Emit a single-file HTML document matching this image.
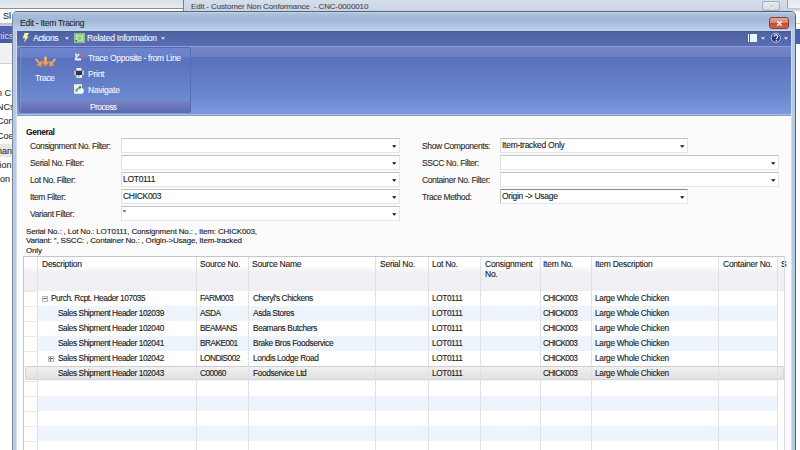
<!DOCTYPE html>
<html><head><meta charset="utf-8">
<style>
*{box-sizing:border-box;margin:0;padding:0}
html,body{width:800px;height:450px;overflow:hidden;background:#fff}
body{position:relative;font-family:"Liberation Sans",sans-serif;font-size:8px;color:#1a1a1a;letter-spacing:-0.3px}
.t{-webkit-text-stroke:0.12px currentColor}
.a{position:absolute;white-space:nowrap}
.t{position:absolute;white-space:nowrap;line-height:10px}
.w{color:#f0f3fc}
</style></head><body>

<div class="a" style="left:0;top:0;width:184px;height:8px;background:linear-gradient(#d9dfe9,#e9ecf1)"></div>
<div class="a" style="left:0;top:8px;width:184px;height:1px;background:#8d9199"></div>
<div class="a" style="left:0;top:9px;width:12px;height:15px;background:#fbfbfb"></div>
<div class="t" style="left:3px;top:11px;font-size:9px;color:#333;letter-spacing:0">Sl</div>
<div class="a" style="left:0;top:23px;width:12px;height:3px;background:linear-gradient(#b8bcc4,#d0d4e0)"></div>
<div class="a" style="left:0;top:26px;width:12px;height:17px;background:linear-gradient(#5563b0,#4a5aa8)"></div>
<div class="t" style="left:-5px;top:30.7px;color:#d8def4;font-size:9px;letter-spacing:0;-webkit-text-stroke:0">mics</div>
<div class="a" style="left:0;top:43px;width:12px;height:20px;background:#f1f1f1"></div>
<div class="a" style="left:0;top:63px;width:12px;height:1px;background:#d0d0d0"></div>
<div class="t" style="left:-3px;top:88px;font-size:9px;color:#333;letter-spacing:0">n C</div>
<div class="t" style="left:-3px;top:102px;font-size:9px;color:#333;letter-spacing:0">NCs</div>
<div class="t" style="left:-3px;top:116px;font-size:9px;color:#333;letter-spacing:0">Con</div>
<div class="t" style="left:-3px;top:131px;font-size:9px;color:#333;letter-spacing:0">Coe</div>
<div class="a" style="left:0;top:144px;width:12px;height:13px;background:#e6e6e6"></div>
<div class="t" style="left:-3px;top:146px;font-size:9px;color:#333;letter-spacing:0">nan</div>
<div class="t" style="left:-3px;top:160px;font-size:9px;color:#333;letter-spacing:0">tion</div>
<div class="t" style="left:0px;top:174px;font-size:9px;color:#333;letter-spacing:0">on</div>
<div class="a" style="left:184px;top:0;width:616px;height:11px;background:linear-gradient(#d6deea,#cad4e3)"></div>
<div class="a" style="left:183px;top:0;width:1px;height:11px;background:#7c8088"></div>
<div class="t" style="left:191px;top:2px;color:#4a4f58;font-size:8px;letter-spacing:-0.13px">Edit - Customer Non Conformance &nbsp;- CNC-0000010</div>
<div class="a" style="left:762px;top:1px;width:18px;height:10px;border:1px solid #a4acb8;border-radius:2px;background:linear-gradient(#e6eaf0,#d4dae4)"></div>
<svg class="a" style="left:768px;top:3px" width="7" height="6" viewBox="0 0 7 6"><path d="M1 0.5L6 5.5M6 0.5L1 5.5" stroke="#fff" stroke-width="2"/><path d="M1 0.5L6 5.5M6 0.5L1 5.5" stroke="#8a909a" stroke-width="0.7"/></svg>
<div class="a" style="left:796px;top:11px;width:4px;height:439px;background:#fdfdfd"></div>
<div class="a" style="left:787px;top:0;width:13px;height:9px;background:linear-gradient(#e2e8f0,#eef2f6);border-left:1px solid #9aa0aa;border-bottom:1px solid #c0c4cc"></div>
<div class="a" style="left:796px;top:29px;width:4px;height:15px;background:#4d60ad"></div>
<div class="a" style="left:796px;top:23px;width:4px;height:1px;background:#c8ccd4"></div>
<div class="a" style="left:12px;top:11px;width:784px;height:450px;background:#b6cae4;border:1px solid #5a6476;border-left-color:#7a88a0;border-radius:5px 5px 0 0"></div>
<div class="a" style="left:13px;top:12px;width:782px;height:19px;background:linear-gradient(#c6d6ea,#a8bfdb 2px,#a0b8d6 8px,#adc4e0 13px,#b6cbe8 17px,#c2d6f2 19px);border-radius:4px 4px 0 0"></div>
<div class="a" style="left:16px;top:31px;width:1px;height:419px;background:#d2def0"></div>
<div class="a" style="left:791px;top:31px;width:1px;height:419px;background:#d2def0"></div>
<div class="t" style="left:20px;top:18px;color:#1b2a44;font-size:8.5px;letter-spacing:-0.25px">Edit - Item Tracing</div>
<div class="a" style="left:769px;top:17px;width:20px;height:12px;border:1px solid #84402f;border-radius:3px;background:linear-gradient(#e4a898,#d8806c 45%,#c24e38 55%,#cc6450)"></div>
<svg class="a" style="left:776px;top:19.5px" width="7" height="7" viewBox="0 0 7 7"><path d="M1.2 1.2L5.8 5.8M5.8 1.2L1.2 5.8" stroke="#fff" stroke-width="1.3"/></svg>
<div class="a" style="left:17px;top:31px;width:774px;height:15px;background:linear-gradient(#48598f,#4f62a2 2px,#5467ab 8px,#5a6cb3)"></div>
<div class="a" style="left:17px;top:46px;width:774px;height:1px;background:#8a9cd8"></div>
<svg class="a" style="left:22px;top:33px" width="8" height="10" viewBox="0 0 8 10"><path d="M2.6 0H7L4.8 3.6H6.8L1.8 9.8 3.2 5.2H0.6Z" fill="#f4f08e"/><path d="M3 0.6H5.8L4 3.4" stroke="#fffde0" stroke-width="0.8" fill="none"/></svg>
<div class="t w" style="left:33px;top:33px;font-size:8.5px;letter-spacing:-0.4px">Actions</div>
<svg class="a" style="left:64.5px;top:37px" width="4" height="3"><path d="M0 0.2H4L2.0 2.8Z" fill="#e4e9f8"/></svg>
<svg class="a" style="left:74px;top:33px" width="11" height="10" viewBox="0 0 11 10"><rect x="0.5" y="0.5" width="10" height="9" fill="#8ccc84" stroke="#9cb8a0" stroke-width="1"/><rect x="2" y="2" width="7" height="6" fill="#b4e6a8"/><circle cx="5.5" cy="5" r="2" fill="#86d070"/><rect x="1.5" y="7" width="1.5" height="1.5" fill="#2f5f3a"/></svg>
<div class="t w" style="left:87px;top:33px;font-size:8.5px;letter-spacing:-0.23px">Related Information</div>
<svg class="a" style="left:160.5px;top:37px" width="4" height="3"><path d="M0 0.2H4L2.0 2.8Z" fill="#e4e9f8"/></svg>
<div class="a" style="left:748px;top:34px;width:1px;height:8px;background:#f0f4fc"></div><div class="a" style="left:750px;top:34px;width:7px;height:8px;background:#eef2fa"></div>
<svg class="a" style="left:760.5px;top:37px" width="4" height="3"><path d="M0 0.2H4L2.0 2.8Z" fill="#e4e9f8"/></svg>
<svg class="a" style="left:770px;top:32px" width="12" height="12" viewBox="0 0 12 12"><circle cx="5.8" cy="5.8" r="4.6" fill="#2c3682" stroke="#c8d0f0" stroke-width="0.9"/><path d="M4.2 4.6C4.2 3.4 5 2.9 6 2.9S7.8 3.5 7.8 4.5C7.8 5.6 6.3 5.8 6.3 7.2" stroke="#fff" stroke-width="1.1" fill="none"/><rect x="5.7" y="8" width="1.2" height="1.2" fill="#fff"/></svg>
<svg class="a" style="left:783.5px;top:37px" width="4" height="3"><path d="M0 0.2H4L2.0 2.8Z" fill="#e4e9f8"/></svg>
<div class="a" style="left:17px;top:47px;width:774px;height:67px;background:linear-gradient(#7584c8,#7080c4 10px,#5a70bb 10px,#5c73bd 14px,#6a89cf 50px,#7b9bdf)"></div>
<div class="a" style="left:17px;top:114px;width:774px;height:1px;background:#a9bde8"></div>
<div class="a" style="left:17px;top:115px;width:774px;height:1px;background:#8c9cb2"></div>
<div class="a" style="left:17px;top:116px;width:774px;height:2px;background:#ffffff"></div>
<div class="a" style="left:19px;top:47px;width:172px;height:66px;border:1px solid #566cb4;border-radius:2px;background:linear-gradient(#6e84cc,#6a80c8 9px,#5a72bd 10px,#5f78c2 25px,#6c8ad0 51px,#7e88cc 52px,#7480c4 54px,#6676bb 59px,#5c6ab0)"></div>
<div class="a" style="left:20px;top:48px;width:1px;height:64px;background:rgba(140,160,220,0.5)"></div>
<div class="t w" style="left:90px;top:102px;font-size:8.5px;letter-spacing:-0.6px">Process</div>
<svg class="a" style="left:34px;top:56px" width="23" height="12" viewBox="0 0 23 12">
<defs><linearGradient id="og" x1="0" y1="0" x2="0" y2="1"><stop offset="0" stop-color="#f8d0b0"/><stop offset="0.5" stop-color="#f0a868"/><stop offset="1" stop-color="#e08838"/></linearGradient></defs>
<g fill="url(#og)" stroke="#a86a3a" stroke-width="0.3">
<path d="M1 3.2L2.4 2.2 5.6 6.2 7.8 4.6 8 11 2 9.6 4.2 7.6Z"/>
<path d="M10.2 0.8H12.8V5.6H15.4L11.5 11.2 7.6 5.6H10.2Z"/>
<path d="M22 3.2L20.6 2.2 17.4 6.2 15.2 4.6 15 11 21 9.6 18.8 7.6Z"/>
</g></svg>
<div class="t w" style="left:35px;top:73.3px;font-size:8.5px;letter-spacing:-0.4px">Trace</div>
<svg class="a" style="left:74px;top:53px" width="11" height="8" viewBox="0 0 11 8">
<path d="M1.2 5.2L5.2 1" stroke="#f4f6fb" stroke-width="1.6"/><rect x="1" y="0.6" width="2" height="2" fill="#e8ecf8"/>
<rect x="0.8" y="5.4" width="6.2" height="2" fill="#f4f6fb"/>
<path d="M6.6 1.2C9.6 1.2 10.4 4.6 8 6.6" stroke="#c8705a" stroke-width="1.3" fill="none"/></svg>
<div class="t w" style="left:88px;top:52.5px;font-size:8.5px;letter-spacing:-0.31px">Trace Opposite - from Line</div>
<svg class="a" style="left:74px;top:68px" width="10" height="10" viewBox="0 0 10 10">
<rect x="2.5" y="0" width="5" height="2.6" fill="#eef0f4"/>
<rect x="0" y="2.8" width="10" height="4.4" fill="#b8c0d4"/>
<rect x="2" y="3" width="6" height="4" fill="#30343c"/>
<rect x="2.5" y="7" width="5.5" height="2.8" fill="#f2f4f8"/><rect x="4" y="7.4" width="1.5" height="1" fill="#50545c"/></svg>
<div class="t w" style="left:88px;top:68.5px;font-size:8.5px;letter-spacing:-0.25px">Print</div>
<svg class="a" style="left:74px;top:84px" width="10" height="10" viewBox="0 0 10 10">
<rect x="0" y="0.2" width="8" height="9.6" fill="#eaf0f2"/>
<circle cx="7" cy="6.8" r="2.9" fill="#f2f7f8"/>
<path d="M1.8 7.4C3 5.2 4.6 3.8 6.6 3.2" stroke="#7aac6c" stroke-width="2.2" fill="none"/>
<circle cx="6.2" cy="3.2" r="1.1" fill="#3e7a44"/></svg>
<div class="t w" style="left:88px;top:84.5px;font-size:8.5px;letter-spacing:-0.24px">Navigate</div>
<div class="a" style="left:17px;top:118px;width:774px;height:332px;background:#fbfbfb"></div>
<div class="t" style="left:26px;top:126.5px;font-weight:bold;font-size:8.5px;letter-spacing:-0.45px;color:#111;-webkit-text-stroke:0">General</div>
<div class="t" style="left:30px;top:140.7px;font-size:8.5px;letter-spacing:-0.38px;color:#2e2e2e">Consignment No. Filter:</div>
<div class="a" style="left:121px;top:138px;width:278.5px;height:15px;background:#fff;border:1px solid #e4e5e7;border-left-color:#dfe0e2;border-top-color:#bfc1c5"></div>
<svg class="a" style="left:391.5px;top:145px" width="4.5" height="3"><path d="M0 0.2H4.5L2.25 2.8Z" fill="#111"/></svg>
<div class="t" style="left:30px;top:157.7px;font-size:8.5px;letter-spacing:-0.38px;color:#2e2e2e">Serial No. Filter:</div>
<div class="a" style="left:121px;top:155px;width:278.5px;height:15px;background:#fff;border:1px solid #e4e5e7;border-left-color:#dfe0e2;border-top-color:#bfc1c5"></div>
<svg class="a" style="left:391.5px;top:162px" width="4.5" height="3"><path d="M0 0.2H4.5L2.25 2.8Z" fill="#111"/></svg>
<div class="t" style="left:30px;top:174.7px;font-size:8.5px;letter-spacing:-0.38px;color:#2e2e2e">Lot No. Filter:</div>
<div class="a" style="left:121px;top:172px;width:278.5px;height:15px;background:#fff;border:1px solid #e4e5e7;border-left-color:#dfe0e2;border-top-color:#bfc1c5"></div>
<div class="t" style="left:123px;top:174.4px;font-size:8.5px;letter-spacing:-0.3px">LOT0111</div>
<svg class="a" style="left:391.5px;top:179px" width="4.5" height="3"><path d="M0 0.2H4.5L2.25 2.8Z" fill="#111"/></svg>
<div class="t" style="left:30px;top:191.7px;font-size:8.5px;letter-spacing:-0.38px;color:#2e2e2e">Item Filter:</div>
<div class="a" style="left:121px;top:189px;width:278.5px;height:15px;background:#fff;border:1px solid #e4e5e7;border-left-color:#dfe0e2;border-top-color:#bfc1c5"></div>
<div class="t" style="left:123px;top:191.4px;font-size:8.5px;letter-spacing:-0.3px">CHICK003</div>
<svg class="a" style="left:391.5px;top:196px" width="4.5" height="3"><path d="M0 0.2H4.5L2.25 2.8Z" fill="#111"/></svg>
<div class="t" style="left:30px;top:208.7px;font-size:8.5px;letter-spacing:-0.38px;color:#2e2e2e">Variant Filter:</div>
<div class="a" style="left:121px;top:206px;width:278.5px;height:15px;background:#fff;border:1px solid #e4e5e7;border-left-color:#dfe0e2;border-top-color:#bfc1c5"></div>
<div class="t" style="left:123px;top:208.4px;font-size:8.5px;letter-spacing:-0.3px">&#39;&#39;</div>
<svg class="a" style="left:391.5px;top:213px" width="4.5" height="3"><path d="M0 0.2H4.5L2.25 2.8Z" fill="#111"/></svg>
<div class="t" style="left:422px;top:140.8px;font-size:8.5px;letter-spacing:-0.38px;color:#2e2e2e">Show Components:</div>
<div class="a" style="left:500px;top:138px;width:188px;height:15px;background:#fff;border:1px solid #e4e5e7;border-left-color:#dfe0e2;border-top-color:#bfc1c5"></div>
<div class="t" style="left:502px;top:140.4px;font-size:8.5px;letter-spacing:-0.27px">Item-tracked Only</div>
<svg class="a" style="left:680px;top:145px" width="4.5" height="3"><path d="M0 0.2H4.5L2.25 2.8Z" fill="#111"/></svg>
<div class="t" style="left:422px;top:157.8px;font-size:8.5px;letter-spacing:-0.38px;color:#2e2e2e">SSCC No. Filter:</div>
<div class="a" style="left:500px;top:155px;width:279px;height:15px;background:#fff;border:1px solid #e4e5e7;border-left-color:#dfe0e2;border-top-color:#bfc1c5"></div>
<svg class="a" style="left:771px;top:162px" width="4.5" height="3"><path d="M0 0.2H4.5L2.25 2.8Z" fill="#111"/></svg>
<div class="t" style="left:422px;top:174.8px;font-size:8.5px;letter-spacing:-0.38px;color:#2e2e2e">Container No. Filter:</div>
<div class="a" style="left:500px;top:172px;width:279px;height:15px;background:#fff;border:1px solid #e4e5e7;border-left-color:#dfe0e2;border-top-color:#bfc1c5"></div>
<svg class="a" style="left:771px;top:179px" width="4.5" height="3"><path d="M0 0.2H4.5L2.25 2.8Z" fill="#111"/></svg>
<div class="t" style="left:422px;top:191.8px;font-size:8.5px;letter-spacing:-0.38px;color:#2e2e2e">Trace Method:</div>
<div class="a" style="left:500px;top:189px;width:188px;height:15px;background:#fff;border:1px solid #e4e5e7;border-left-color:#b8c2d0;border-top-color:#7d8ca4"></div>
<div class="t" style="left:502px;top:191.4px;font-size:8.5px;letter-spacing:-0.27px">Origin -&gt; Usage</div>
<svg class="a" style="left:680px;top:196px" width="4.5" height="3"><path d="M0 0.2H4.5L2.25 2.8Z" fill="#111"/></svg>
<div class="t" style="left:26px;top:227px;line-height:9.4px;letter-spacing:-0.17px">Serial No.: , Lot No.: LOT0111, Consignment No.: , Item: CHICK003,<br>Variant: &#39;&#39;, SSCC: , Container No.: , Origin-&gt;Usage, Item-tracked<br>Only</div>
<div class="a" style="left:23px;top:256px;width:762px;height:194px;background:#fff;border:1px solid #c4c6ca;border-bottom:none"></div>
<div class="a" style="left:24px;top:257px;width:760px;height:34px;background:linear-gradient(#fff,#fff 9px,#f1f1f5 15px,#eeeef3)"></div>
<div class="a" style="left:38px;top:291px;width:739px;height:15px;background:#ffffff"></div>
<div class="a" style="left:24px;top:291px;width:14px;height:1px;background:#e8e9ec"></div>
<div class="a" style="left:38px;top:306px;width:739px;height:15px;background:#eef4fc"></div>
<div class="a" style="left:24px;top:306px;width:14px;height:1px;background:#e8e9ec"></div>
<div class="a" style="left:38px;top:321px;width:739px;height:15px;background:#ffffff"></div>
<div class="a" style="left:24px;top:321px;width:14px;height:1px;background:#e8e9ec"></div>
<div class="a" style="left:38px;top:336px;width:739px;height:15px;background:#eef4fc"></div>
<div class="a" style="left:24px;top:336px;width:14px;height:1px;background:#e8e9ec"></div>
<div class="a" style="left:38px;top:351px;width:739px;height:15px;background:#ffffff"></div>
<div class="a" style="left:24px;top:351px;width:14px;height:1px;background:#e8e9ec"></div>
<div class="a" style="left:38px;top:366px;width:739px;height:15px;background:#eef4fc"></div>
<div class="a" style="left:24px;top:366px;width:14px;height:1px;background:#e8e9ec"></div>
<div class="a" style="left:38px;top:381px;width:739px;height:15px;background:#ffffff"></div>
<div class="a" style="left:24px;top:381px;width:14px;height:1px;background:#e8e9ec"></div>
<div class="a" style="left:38px;top:396px;width:739px;height:15px;background:#eef4fc"></div>
<div class="a" style="left:24px;top:396px;width:14px;height:1px;background:#e8e9ec"></div>
<div class="a" style="left:38px;top:411px;width:739px;height:15px;background:#ffffff"></div>
<div class="a" style="left:24px;top:411px;width:14px;height:1px;background:#e8e9ec"></div>
<div class="a" style="left:38px;top:426px;width:739px;height:15px;background:#eef4fc"></div>
<div class="a" style="left:24px;top:426px;width:14px;height:1px;background:#e8e9ec"></div>
<div class="a" style="left:38px;top:441px;width:739px;height:15px;background:#ffffff"></div>
<div class="a" style="left:24px;top:441px;width:14px;height:1px;background:#e8e9ec"></div>
<div class="a" style="left:25px;top:366px;width:759px;height:14px;border-radius:2px;background:linear-gradient(#f0f0f0,#e9e9e9 50%,#e2e2e2);border:1px solid #d6d6d6;border-top-color:#cfcfcf"></div>
<div class="a" style="left:37px;top:257px;width:1px;height:194px;background:#e0e1e4"></div>
<div class="a" style="left:196px;top:257px;width:1px;height:194px;background:#e0e1e4"></div>
<div class="a" style="left:248px;top:257px;width:1px;height:194px;background:#e0e1e4"></div>
<div class="a" style="left:375px;top:257px;width:1px;height:194px;background:#e0e1e4"></div>
<div class="a" style="left:428px;top:257px;width:1px;height:194px;background:#e0e1e4"></div>
<div class="a" style="left:480px;top:257px;width:1px;height:194px;background:#e0e1e4"></div>
<div class="a" style="left:540px;top:257px;width:1px;height:194px;background:#e0e1e4"></div>
<div class="a" style="left:591px;top:257px;width:1px;height:194px;background:#e0e1e4"></div>
<div class="a" style="left:718px;top:257px;width:1px;height:194px;background:#e0e1e4"></div>
<div class="a" style="left:777px;top:257px;width:1px;height:194px;background:#e0e1e4"></div>
<div class="t" style="left:42px;top:260px;line-height:9.8px;font-size:8.5px;letter-spacing:-0.25px">Description</div>
<div class="t" style="left:200px;top:260px;line-height:9.8px;font-size:8.5px;letter-spacing:-0.25px">Source No.</div>
<div class="t" style="left:252px;top:260px;line-height:9.8px;font-size:8.5px;letter-spacing:-0.25px">Source Name</div>
<div class="t" style="left:380px;top:260px;line-height:9.8px;font-size:8.5px;letter-spacing:-0.25px">Serial No.</div>
<div class="t" style="left:432px;top:260px;line-height:9.8px;font-size:8.5px;letter-spacing:-0.25px">Lot No.</div>
<div class="t" style="left:485px;top:260px;line-height:9.8px;font-size:8.5px;letter-spacing:-0.25px">Consignment<br>No.</div>
<div class="t" style="left:543px;top:260px;line-height:9.8px;font-size:8.5px;letter-spacing:-0.25px">Item No.</div>
<div class="t" style="left:595px;top:260px;line-height:9.8px;font-size:8.5px;letter-spacing:-0.25px">Item Description</div>
<div class="t" style="left:723px;top:260px;line-height:9.8px;font-size:8.5px;letter-spacing:-0.25px">Container No.</div>
<div class="t" style="left:781px;top:260px;line-height:9.8px;font-size:8.5px;letter-spacing:-0.25px">S</div>
<div class="a" style="left:784px;top:256px;width:1px;height:194px;background:#d8d9dc"></div>
<div class="t" style="left:51px;top:293.2px;font-size:8.3px;letter-spacing:-0.42px">Purch. Rcpt. Header 107035</div>
<div class="a" style="left:42px;top:296px;width:6px;height:6px;border:1px solid #b4b8be;background:#fcfcfc"></div>
<div class="a" style="left:43px;top:298px;width:4px;height:1px;background:#6a6e74"></div>
<div class="t" style="left:200px;top:293.2px;font-size:8.3px;letter-spacing:-0.55px">FARM003</div>
<div class="t" style="left:253px;top:293.2px;font-size:8.3px;letter-spacing:-0.38px">Cheryl&#39;s Chickens</div>
<div class="t" style="left:432px;top:293.2px;font-size:8.3px;letter-spacing:-0.42px">LOT0111</div>
<div class="t" style="left:543px;top:293.2px;font-size:8.3px;letter-spacing:-0.7px">CHICK003</div>
<div class="t" style="left:595px;top:293.2px;font-size:8.3px;letter-spacing:-0.29px">Large Whole Chicken</div>
<div class="t" style="left:58px;top:308.2px;font-size:8.3px;letter-spacing:-0.42px">Sales Shipment Header 102039</div>
<div class="t" style="left:200px;top:308.2px;font-size:8.3px;letter-spacing:-0.55px">ASDA</div>
<div class="t" style="left:253px;top:308.2px;font-size:8.3px;letter-spacing:-0.38px">Asda Stores</div>
<div class="t" style="left:432px;top:308.2px;font-size:8.3px;letter-spacing:-0.42px">LOT0111</div>
<div class="t" style="left:543px;top:308.2px;font-size:8.3px;letter-spacing:-0.7px">CHICK003</div>
<div class="t" style="left:595px;top:308.2px;font-size:8.3px;letter-spacing:-0.29px">Large Whole Chicken</div>
<div class="t" style="left:58px;top:323.2px;font-size:8.3px;letter-spacing:-0.42px">Sales Shipment Header 102040</div>
<div class="t" style="left:200px;top:323.2px;font-size:8.3px;letter-spacing:-0.55px">BEAMANS</div>
<div class="t" style="left:253px;top:323.2px;font-size:8.3px;letter-spacing:-0.38px">Beamans Butchers</div>
<div class="t" style="left:432px;top:323.2px;font-size:8.3px;letter-spacing:-0.42px">LOT0111</div>
<div class="t" style="left:543px;top:323.2px;font-size:8.3px;letter-spacing:-0.7px">CHICK003</div>
<div class="t" style="left:595px;top:323.2px;font-size:8.3px;letter-spacing:-0.29px">Large Whole Chicken</div>
<div class="t" style="left:58px;top:338.2px;font-size:8.3px;letter-spacing:-0.42px">Sales Shipment Header 102041</div>
<div class="t" style="left:200px;top:338.2px;font-size:8.3px;letter-spacing:-0.55px">BRAKE001</div>
<div class="t" style="left:253px;top:338.2px;font-size:8.3px;letter-spacing:-0.38px">Brake Bros Foodservice</div>
<div class="t" style="left:432px;top:338.2px;font-size:8.3px;letter-spacing:-0.42px">LOT0111</div>
<div class="t" style="left:543px;top:338.2px;font-size:8.3px;letter-spacing:-0.7px">CHICK003</div>
<div class="t" style="left:595px;top:338.2px;font-size:8.3px;letter-spacing:-0.29px">Large Whole Chicken</div>
<div class="t" style="left:58px;top:353.2px;font-size:8.3px;letter-spacing:-0.42px">Sales Shipment Header 102042</div>
<div class="a" style="left:48px;top:356px;width:6px;height:6px;border:1px solid #b4b8be;background:#fcfcfc"></div>
<div class="a" style="left:49px;top:358px;width:4px;height:1px;background:#6a6e74"></div>
<div class="a" style="left:50px;top:357px;width:1px;height:4px;background:#6a6e74"></div>
<div class="t" style="left:200px;top:353.2px;font-size:8.3px;letter-spacing:-0.55px">LONDIS002</div>
<div class="t" style="left:253px;top:353.2px;font-size:8.3px;letter-spacing:-0.38px">Londis Lodge Road</div>
<div class="t" style="left:432px;top:353.2px;font-size:8.3px;letter-spacing:-0.42px">LOT0111</div>
<div class="t" style="left:543px;top:353.2px;font-size:8.3px;letter-spacing:-0.7px">CHICK003</div>
<div class="t" style="left:595px;top:353.2px;font-size:8.3px;letter-spacing:-0.29px">Large Whole Chicken</div>
<div class="t" style="left:58px;top:368.2px;font-size:8.3px;letter-spacing:-0.42px">Sales Shipment Header 102043</div>
<div class="t" style="left:200px;top:368.2px;font-size:8.3px;letter-spacing:-0.55px">C00060</div>
<div class="t" style="left:253px;top:368.2px;font-size:8.3px;letter-spacing:-0.38px">Foodservice Ltd</div>
<div class="t" style="left:432px;top:368.2px;font-size:8.3px;letter-spacing:-0.42px">LOT0111</div>
<div class="t" style="left:543px;top:368.2px;font-size:8.3px;letter-spacing:-0.7px">CHICK003</div>
<div class="t" style="left:595px;top:368.2px;font-size:8.3px;letter-spacing:-0.29px">Large Whole Chicken</div>
</body></html>
